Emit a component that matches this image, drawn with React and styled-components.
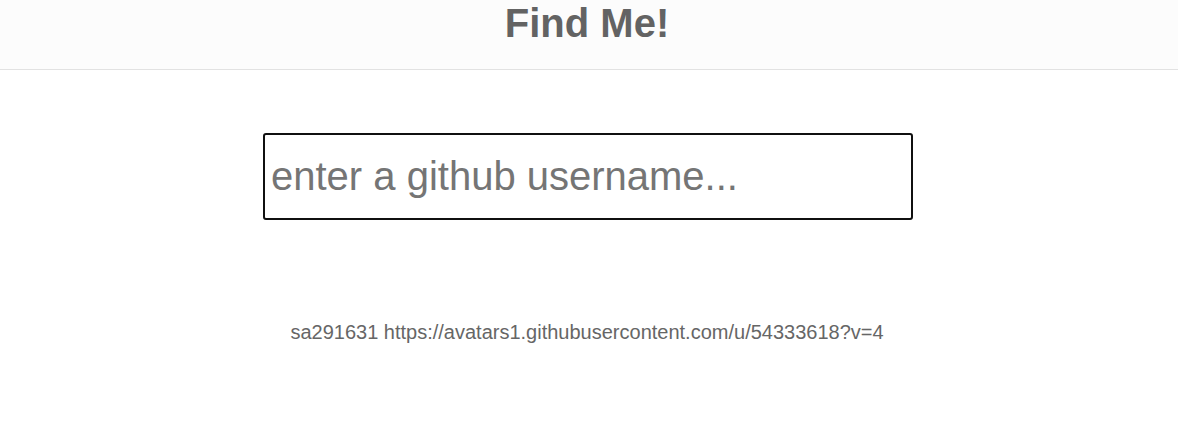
import React, { useState } from 'react'
import styled, { createGlobalStyle } from 'styled-components'

const GlobalStyle = createGlobalStyle`
    body {
        margin: 0;
        background: #ffffff;
        font-family: "Liberation Sans", Arial, sans-serif;
    }
`

function App() {
    const [username, setUsername] = useState('')

    return (
        <Page>
            <GlobalStyle />
            <Header>
                <Title>Find Me!</Title>
            </Header>
            <Main>
                <SearchInput
                    type="text"
                    placeholder="enter a github username..."
                    value={username}
                    onChange={(e) => setUsername(e.target.value)}
                    autoFocus
                />
                <Result>sa291631 https://avatars1.githubusercontent.com/u/54333618?v=4</Result>
            </Main>
        </Page>
    )
}

export default App

const Page = styled.div`
    display: flex;
    flex-direction: column;
    min-height: 446px;
`
const Header = styled.header`
    height: 69px;
    padding-right: 4px;
    background-color: #fcfcfc;
    border-bottom: 1px solid #e2e2e2;
    display: flex;
    justify-content: center;
`
const Title = styled.h1`
    margin: 0;
    font-size: 40px;
    font-weight: 700;
    line-height: 46px;
    color: #636363;
`
const Main = styled.main`
    display: flex;
    flex-direction: column;
    align-items: center;
    padding-top: 63px;
    padding-right: 4px;
`
const SearchInput = styled.input`
    box-sizing: border-box;
    width: 650px;
    height: 87px;
    margin-left: 2px;
    padding: 0 6px;
    border: 2px solid #101010;
    border-radius: 3px;
    outline: none;
    font-family: "Liberation Sans", Arial, sans-serif;
    font-size: 40px;
    color: #222;
    caret-color: #000;
    &::placeholder {
        color: #757575;
    }
`
const Result = styled.div`
    margin-top: 101px;
    font-size: 20px;
    line-height: 23px;
    color: #666666;
`
